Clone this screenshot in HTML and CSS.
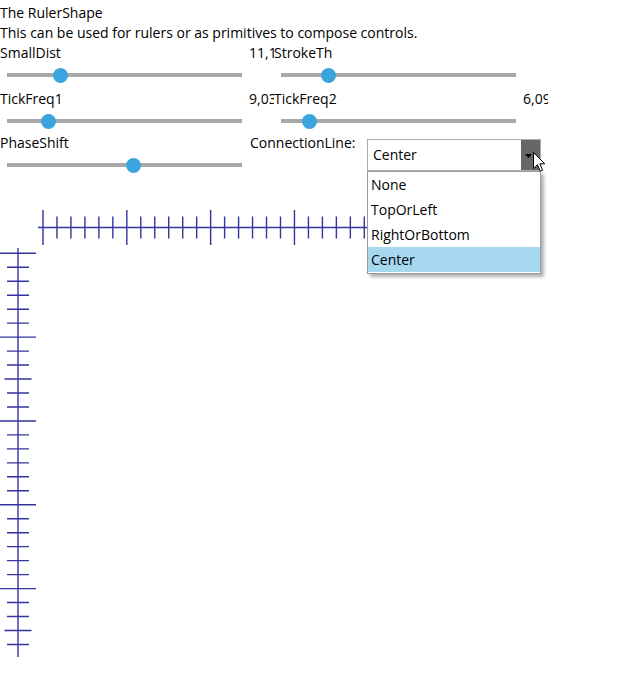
FILE: index.html
```html
<!DOCTYPE html>
<html>
<head>
<meta charset="utf-8">
<link rel="stylesheet" href="styles.css">
</head>
<body>
<div class="page">
  <div class="line">The RulerShape</div>
  <div class="line">This can be used for rulers or as primitives to compose controls.</div>

  <div class="row row-1">
    <div class="item">
      <div class="label">SmallDist</div><div class="value">11,19</div>
      <div class="slider"><div class="track"></div><div class="thumb" style="left:46px"></div></div>
    </div>
    <div class="item">
      <div class="label">StrokeTh</div><div class="value"></div>
      <div class="slider"><div class="track"></div><div class="thumb" style="left:40px"></div></div>
    </div>
  </div>

  <div class="row row-2">
    <div class="item">
      <div class="label">TickFreq1</div><div class="value">9,03</div>
      <div class="slider"><div class="track"></div><div class="thumb" style="left:34px"></div></div>
    </div>
    <div class="item">
      <div class="label">TickFreq2</div><div class="value">6,09</div>
      <div class="slider"><div class="track"></div><div class="thumb" style="left:21px"></div></div>
    </div>
  </div>

  <div class="row row-3">
    <div class="item item-short">
      <div class="label">PhaseShift</div><div class="value"></div>
      <div class="slider"><div class="track"></div><div class="thumb" style="left:119px"></div></div>
    </div>
    <div class="combo-group">
      <div class="combo-label">ConnectionLine:</div>
      <div class="combo">
        <div class="combo-text">Center</div>
        <div class="combo-button">
          <svg class="combo-arrow" width="7" height="4" viewBox="0 0 7 4"><path d="M0 0L3.5 4L7 0Z" fill="#000"/></svg>
        </div>
        <svg class="cursor" width="13" height="20" viewBox="0 0 13 20">
          <path d="M0.5 0.5L0.5 16.5L4.5 12.8L7.3 19.2L9.6 18.2L6.9 11.8L11.8 11.8Z" fill="#fff" stroke="#000" stroke-width="1" stroke-linejoin="miter"/>
        </svg>
        <div class="popup">
          <div class="option">None</div>
          <div class="option">TopOrLeft</div>
          <div class="option">RightOrBottom</div>
          <div class="option option-selected">Center</div>
        </div>
      </div>
    </div>
  </div>

  <svg class="rulers" width="642" height="500" viewBox="0 180 642 500">
    <g stroke="#3434a0" stroke-width="1.4" fill="none">
      <path d="M38 227.5H430"/>
      <path d="M43 210V245M126.82 210V245M210.64 210V245M294.46 210V245M378.28 210V245"/>
      <path d="M56.97 216.5V238.5M70.94 216.5V238.5M84.91 216.5V238.5M98.88 216.5V238.5M112.85 216.5V238.5M140.79 216.5V238.5M154.76 216.5V238.5M168.73 216.5V238.5M182.7 216.5V238.5M196.67 216.5V238.5M224.61 216.5V238.5M238.58 216.5V238.5M252.55 216.5V238.5M266.52 216.5V238.5M280.49 216.5V238.5M308.43 216.5V238.5M322.4 216.5V238.5M336.37 216.5V238.5M350.34 216.5V238.5M364.31 216.5V238.5M392.25 216.5V238.5M406.22 216.5V238.5M420.19 216.5V238.5"/>
      <path d="M18 248V657"/>
      <path d="M0 253.3H36M0 337.12H36M0 420.94H36M0 504.76H36M0 588.58H36"/>
      <path d="M4.5 379.03H31.5M4.5 630.49H31.5"/>
      <path d="M7 267.27H29M7 281.24H29M7 295.21H29M7 309.18H29M7 323.15H29M7 351.09H29M7 365.06H29M7 393H29M7 406.97H29M7 434.91H29M7 448.88H29M7 462.85H29M7 476.82H29M7 490.79H29M7 518.73H29M7 532.7H29M7 546.67H29M7 560.64H29M7 574.61H29M7 602.55H29M7 616.52H29M7 644.46H29"/>
    </g>
  </svg>
</div>
</body>
</html>
```

FILE: styles.css
```css
html, body {
  margin: 0;
  padding: 0;
  background: #ffffff;
}

.page {
  position: relative;
  width: 642px;
  padding-top: 3px;
  font-family: "Open Sans", "Noto Sans", sans-serif;
  font-size: 14px;
  line-height: 20px;
  color: #000;
}

.line {
  height: 20px;
  white-space: nowrap;
}

.row {
  display: flex;
  align-items: flex-start;
}

.row-1 { height: 46px; }
.row-2 { height: 44px; }
.row-3 { height: 47px; position: relative; z-index: 2; }

.item {
  width: 274px;
  display: grid;
  grid-template-columns: 249px 25px;
  grid-template-rows: 20px auto;
}

.item-short {
  width: 250px;
  grid-template-columns: 249px 1px;
}

.label {
  white-space: nowrap;
}

.value {
  white-space: nowrap;
  overflow: hidden;
}

.slider {
  grid-column: 1 / span 2;
  position: relative;
  width: 235px;
  height: 15px;
  margin-left: 7px;
  margin-top: 4.5px;
}

.track {
  position: absolute;
  left: 0;
  right: 0;
  top: 5.5px;
  height: 4px;
  background: #a8a8a8;
}

.thumb {
  position: absolute;
  top: 0;
  width: 15px;
  height: 15px;
  border-radius: 50%;
  background: #3aa5dd;
}

.combo-group {
  display: flex;
  align-items: flex-start;
}

.combo-label {
  width: 117px;
  white-space: nowrap;
}

.combo {
  position: relative;
  margin-top: 6px;
  width: 172px;
  height: 30px;
  border: 1px solid #acacac;
  background: #fff;
  display: flex;
  align-items: center;
}

.combo-text {
  flex: 1;
  padding-left: 5px;
}

.combo-button {
  width: 19px;
  height: 30px;
  background: #666666;
  display: flex;
  align-items: center;
  justify-content: center;
}

.combo-arrow {
  display: block;
  margin-left: -4px;
  margin-top: 1px;
}

.cursor {
  position: absolute;
  left: 165px;
  top: 12px;
  z-index: 5;
}

.popup {
  position: absolute;
  left: -1px;
  top: 31px;
  width: 172px;
  border: 1px solid #9a9a9a;
  background: #fff;
  box-shadow: 3px 3px 3px rgba(0, 0, 0, 0.3);
  padding: 0 0 1px 0;
  z-index: 4;
}

.option {
  height: 21px;
  line-height: 21px;
  padding-top: 2px;
  padding-left: 3px;
  padding-bottom: 2px;
  white-space: nowrap;
}

.option-selected {
  background: #a6d8f0;
}

.rulers {
  display: block;
}
```
